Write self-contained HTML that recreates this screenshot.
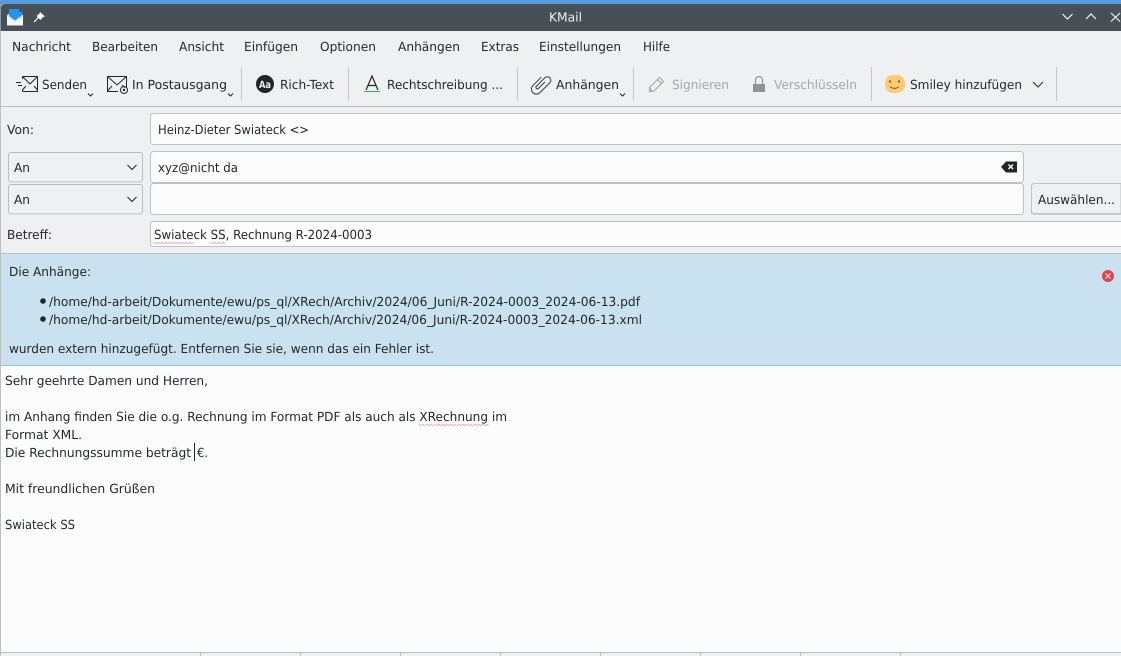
<!DOCTYPE html>
<html lang="de">
<head>
<meta charset="utf-8">
<title>KMail</title>
<style>
html,body{margin:0;padding:0;background:#eff0f1;overflow:hidden;width:1121px;height:656px}
svg{display:block;position:absolute;left:0;top:0}
text{font-family:"DejaVu Sans","Liberation Sans",sans-serif;font-size:12.6px;fill:#232629;text-rendering:geometricPrecision}
.d{fill:#a4a6a8}
.w{fill:#eff0f1}
.ln{stroke:#232629;stroke-width:1;fill:none}
.sq{fill:none;stroke:#e8808a;stroke-width:.8;stroke-dasharray:1.500 .5}
</style>
</head>
<body>
<svg width="1121" height="656" viewBox="0 0 1121 656" xmlns="http://www.w3.org/2000/svg">
<rect width="1121" height="656" fill="#eff0f1"/>
<rect width="1121" height="4" fill="#5a9bdb"/>
<path d="M0 4H1121V31H0Z" fill="#475057"/>
<path d="M0 4H4L1 7V31H0Z" fill="#8a9aa8"/>
<rect x="0" y="31" width="1" height="625" fill="#bcbebf"/>

<!-- title icons -->
<path d="M7 15L15 10.500L23 15V25.500H7Z" fill="#f4f6f7"/>
<path d="M9 9H19L22 11.500V17L15 20.500L9 17Z" fill="#1d99f3"/>
<path d="M19 9L22 11.500H19Z" fill="#0b5f9e"/>
<path d="M7 15L15 21L23 15" fill="none" stroke="#cfd8de" stroke-width="1"/>
<path d="M40 12L45 16.500L43 17L40.500 20L36.500 16L39.500 13.500Z" fill="#fcfcfc"/>
<path d="M38.500 17.500L34 22" stroke="#fcfcfc" stroke-width="1.200"/>
<text x="549" y="21.500" textLength="33" lengthAdjust="spacingAndGlyphs" class="w">KMail</text>
<path d="M1062.500 14L1067.500 19L1072.500 14M1086 19L1091 14L1096 19M1111 13L1120 21.500M1120 13L1111 21.500" fill="none" stroke="#f4f5f6" stroke-width="1.200"/>

<!-- menu -->
<text x="12" y="51" textLength="59" lengthAdjust="spacingAndGlyphs">Nachricht</text>
<text x="92" y="51" textLength="66" lengthAdjust="spacingAndGlyphs">Bearbeiten</text>
<text x="179" y="51" textLength="45" lengthAdjust="spacingAndGlyphs">Ansicht</text>
<text x="244" y="51" textLength="54" lengthAdjust="spacingAndGlyphs">Einfügen</text>
<text x="320" y="51" textLength="56" lengthAdjust="spacingAndGlyphs">Optionen</text>
<text x="398" y="51" textLength="62" lengthAdjust="spacingAndGlyphs">Anhängen</text>
<text x="481" y="51" textLength="38" lengthAdjust="spacingAndGlyphs">Extras</text>
<text x="539" y="51" textLength="82" lengthAdjust="spacingAndGlyphs">Einstellungen</text>
<text x="643" y="51" textLength="27" lengthAdjust="spacingAndGlyphs">Hilfe</text>

<!-- toolbar -->
<rect x="241" y="67" width="1" height="34" fill="#c4c6c8"/>
<rect x="348" y="67" width="1" height="34" fill="#c4c6c8"/>
<rect x="517" y="67" width="1" height="34" fill="#c4c6c8"/>
<rect x="633" y="67" width="1" height="34" fill="#c4c6c8"/>
<rect x="871" y="67" width="1" height="34" fill="#c4c6c8"/>
<rect x="1056" y="67" width="1" height="34" fill="#c4c6c8"/>
<rect x="0" y="106" width="1121" height="1" fill="#bcbebf"/>

<!-- Senden icon -->
<path class="ln" d="M22.500 76.500H37.500V91.500H22.500M22.500 76.500L30 84L37.500 76.500M26 86L22.500 90M34 86L37.500 90M22.500 76.500V79M22.500 89V91.500"/>
<path class="ln" d="M16 82.500H21M18 85.500H22"/>
<text x="42" y="89" textLength="45" lengthAdjust="spacingAndGlyphs">Senden</text>
<path d="M88 93.500L90.500 96L93 93.500" fill="none" stroke="#232629"/>

<!-- Postausgang icon -->
<path class="ln" d="M107.500 76.500H126.500V87M118 91.500H107.500V76.500M107.500 76.500L117 85L126.500 76.500M112 86L107.500 91M122 85L125 87.500"/>
<circle cx="124" cy="90" r="3.500" class="ln"/>
<circle cx="124" cy="90" r="1.200" fill="#232629"/>
<text x="132" y="89" textLength="95" lengthAdjust="spacingAndGlyphs">In Postausgang</text>
<path d="M228 93.500L230.500 96L233 93.500" fill="none" stroke="#232629"/>

<!-- Rich text -->
<circle cx="265" cy="84" r="9" fill="#232629"/>
<text x="259" y="88" textLength="12" lengthAdjust="spacingAndGlyphs" style="font-size:10px;font-weight:bold;fill:#eff0f1">Aa</text>
<text x="280" y="89" textLength="54" lengthAdjust="spacingAndGlyphs">Rich-Text</text>

<!-- Spelling -->
<path d="M366 90L372 76L378 90M368 85.500H376" fill="none" stroke="#232629" stroke-width="1.200"/>
<rect x="364" y="91" width="16" height="1" fill="#27ae60"/>
<text x="387" y="89" textLength="116" lengthAdjust="spacingAndGlyphs">Rechtschreibung ...</text>

<!-- Paperclip -->
<g transform="rotate(45 541 84.500)">
<path d="M536 79V91a5 5 0 0 0 10 0V77a3.500 3.500 0 0 0-7 0V89a1.500 1.500 0 0 0 3 0V80" fill="none" stroke="#3a3d40" stroke-width="1"/>
</g>
<text x="556" y="89" textLength="63" lengthAdjust="spacingAndGlyphs">Anhängen</text>
<path d="M620 93.500L622.500 96L625 93.500" fill="none" stroke="#232629"/>

<!-- Signieren -->
<path d="M649.500 91.500V87.500L659.500 77.500L663.500 81.500L653.500 91.500ZM657.500 79.500L661.500 83.500" fill="none" stroke="#a4a6a8" stroke-width="1.100"/>
<path d="M650 91V88L652.500 90.500Z" fill="#a4a6a8"/>
<text x="672" y="89" textLength="57" lengthAdjust="spacingAndGlyphs" class="d">Signieren</text>

<!-- Lock -->
<rect x="753" y="84" width="12" height="8" fill="#909294"/>
<path d="M755.500 84V80C755.500 75.500 762.500 75.500 762.500 80V84" fill="none" stroke="#909294" stroke-width="1.200"/>
<text x="774" y="89" textLength="83" lengthAdjust="spacingAndGlyphs" class="d">Verschlüsseln</text>

<!-- Smiley -->
<rect x="885" y="75" width="20" height="18" rx="8" fill="#fdcb73"/>
<circle cx="890" cy="81.500" r="1.100" fill="#6d5730"/>
<circle cx="899" cy="81.500" r="1.100" fill="#6d5730"/>
<path d="M890 86.500C892 89 897 89 899 86.500" fill="none" stroke="#6d5730"/>
<text x="910" y="89" textLength="112" lengthAdjust="spacingAndGlyphs">Smiley hinzufügen</text>
<path d="M1033 82L1038 87L1043 82" fill="none" stroke="#232629"/>

<!-- Von -->
<text x="7" y="134" textLength="27" lengthAdjust="spacingAndGlyphs">Von:</text>
<path d="M1121 113.500H153.500Q150.500 113.500 150.500 116.500V141.500Q150.500 144.500 153.500 144.500H1121" fill="#fcfcfc" stroke="#bfc1c3"/>
<text x="158" y="134" textLength="151" lengthAdjust="spacingAndGlyphs">Heinz-Dieter Swiateck &lt;&gt;</text>

<!-- To 1 -->
<rect x="8.500" y="152.500" width="134" height="29" rx="2.500" fill="#eff0f1" stroke="#b9bbbd"/>
<rect x="9" y="181" width="133" height="1.500" fill="#cfd1d2"/>
<text x="14" y="172" textLength="16" lengthAdjust="spacingAndGlyphs">An</text>
<path d="M127.500 165L132 169.500L136.500 165" fill="none" stroke="#232629"/>
<rect x="150.500" y="151.500" width="873" height="31" rx="3" fill="#fcfcfc" stroke="#bfc1c3"/>
<text x="158" y="172" textLength="80" lengthAdjust="spacingAndGlyphs">xyz@nicht da</text>
<path d="M1001 167L1006 161.500H1017V172.500H1006Z" fill="#232629"/>
<path d="M1008.500 164.500L1013 169M1013 164.500L1008.500 169" stroke="#fcfcfc" stroke-width="1.500"/>

<!-- To 2 -->
<rect x="8.500" y="184.500" width="134" height="29" rx="2.500" fill="#eff0f1" stroke="#b9bbbd"/>
<rect x="9" y="213" width="133" height="1.500" fill="#cfd1d2"/>
<text x="14" y="204" textLength="16" lengthAdjust="spacingAndGlyphs">An</text>
<path d="M127.500 197L132 201.500L136.500 197" fill="none" stroke="#232629"/>
<rect x="150.500" y="183.500" width="873" height="31" rx="3" fill="#fcfcfc" stroke="#bfc1c3"/>
<path d="M1031.500 214V186.500Q1031.500 183.500 1034.500 183.500H1121V213.500H1034.500Q1031.500 213.500 1031.500 211Z" fill="#eff0f1" stroke="#bfc1c3"/>
<rect x="1033" y="214" width="88" height="1" fill="#d0d2d3"/>
<text x="1038" y="204" textLength="77" lengthAdjust="spacingAndGlyphs">Auswählen...</text>

<!-- Betreff -->
<text x="7" y="239" textLength="45" lengthAdjust="spacingAndGlyphs">Betreff:</text>
<path d="M1121 221.500H153.500Q150.500 221.500 150.500 224.500V243.500Q150.500 246.500 153.500 246.500H1121" fill="#fcfcfc" stroke="#bfc1c3"/>
<text x="154" y="239" textLength="218" lengthAdjust="spacingAndGlyphs">Swiateck SS, Rechnung R-2024-0003</text>
<path class="sq" d="M154 242.500L156 243.500L158 242.500L160 243.500L162 242.500L164 243.500L166 242.500L168 243.500L170 242.500L172 243.500L174 242.500L176 243.500L178 242.500L180 243.500L182 242.500L184 243.500L186 242.500L188 243.500L190 242.500L192 243.500L194 242.500M211 242.500L213 243.500L215 242.500L217 243.500L219 242.500L221 243.500L223 242.500L225 243.500"/>

<!-- Notification -->
<rect x="0" y="253" width="1121" height="1" fill="#bcbebf"/>
<rect x="1" y="254" width="1120" height="111" fill="#cae2ef"/>
<rect x="1" y="365" width="1120" height="1" fill="#92c5e4"/>
<text x="9" y="276" textLength="82" lengthAdjust="spacingAndGlyphs">Die Anhänge:</text>
<circle cx="43" cy="301" r="2.800" fill="#232629"/>
<text x="49" y="306" textLength="591" lengthAdjust="spacingAndGlyphs">/home/hd-arbeit/Dokumente/ewu/ps_ql/XRech/Archiv/2024/06_Juni/R-2024-0003_2024-06-13.pdf</text>
<circle cx="43" cy="319" r="2.800" fill="#232629"/>
<text x="49" y="324" textLength="593" lengthAdjust="spacingAndGlyphs">/home/hd-arbeit/Dokumente/ewu/ps_ql/XRech/Archiv/2024/06_Juni/R-2024-0003_2024-06-13.xml</text>
<text x="9" y="353" textLength="425" lengthAdjust="spacingAndGlyphs">wurden extern hinzugefügt. Entfernen Sie sie, wenn das ein Fehler ist.</text>
<circle cx="1108" cy="276" r="6" fill="#da4453"/>
<path d="M1105.500 273.500L1110.500 278.500M1110.500 273.500L1105.500 278.500" stroke="#f6dde0" stroke-width="1.200"/>

<!-- Body -->
<rect x="1" y="366" width="1120" height="286" fill="#fcfcfc"/>
<text x="5" y="385" textLength="203" lengthAdjust="spacingAndGlyphs">Sehr geehrte Damen und Herren,</text>
<text x="5" y="421" textLength="502" lengthAdjust="spacingAndGlyphs">im Anhang finden Sie die o.g. Rechnung im Format PDF als auch als XRechnung im</text>
<path class="sq" d="M419 424.500L421 425.500L423 424.500L425 425.500L427 424.500L429 425.500L431 424.500L433 425.500L435 424.500L437 425.500L439 424.500L441 425.500L443 424.500L445 425.500L447 424.500L449 425.500L451 424.500L453 425.500L455 424.500L457 425.500L459 424.500L461 425.500L463 424.500L465 425.500L467 424.500L469 425.500L471 424.500L473 425.500L475 424.500L477 425.500L479 424.500L481 425.500L483 424.500L485 425.500L487 424.500L489 425.500"/>
<text x="5" y="439" textLength="77" lengthAdjust="spacingAndGlyphs">Format XML.</text>
<text x="5" y="457" textLength="186" lengthAdjust="spacingAndGlyphs">Die Rechnungssumme beträgt</text>
<rect x="194" y="443" width="1" height="18" fill="#232629"/>
<text x="197" y="457" textLength="11" lengthAdjust="spacingAndGlyphs">€.</text>
<text x="5" y="493" textLength="150" lengthAdjust="spacingAndGlyphs">Mit freundlichen Grüßen</text>
<text x="5" y="529" textLength="70" lengthAdjust="spacingAndGlyphs">Swiateck SS</text>

<!-- Status bar -->
<rect x="0" y="652" width="1121" height="1" fill="#bcbebf"/>
<rect x="1" y="653" width="1120" height="3" fill="#eff0f1"/>
<path d="M200.500 653V656M300.500 653V656M400.500 653V656M500.500 653V656M600.500 653V656M700.500 653V656M800.500 653V656M900.500 653V656" stroke="#bcbebf"/>
</svg>
</body>
</html>
